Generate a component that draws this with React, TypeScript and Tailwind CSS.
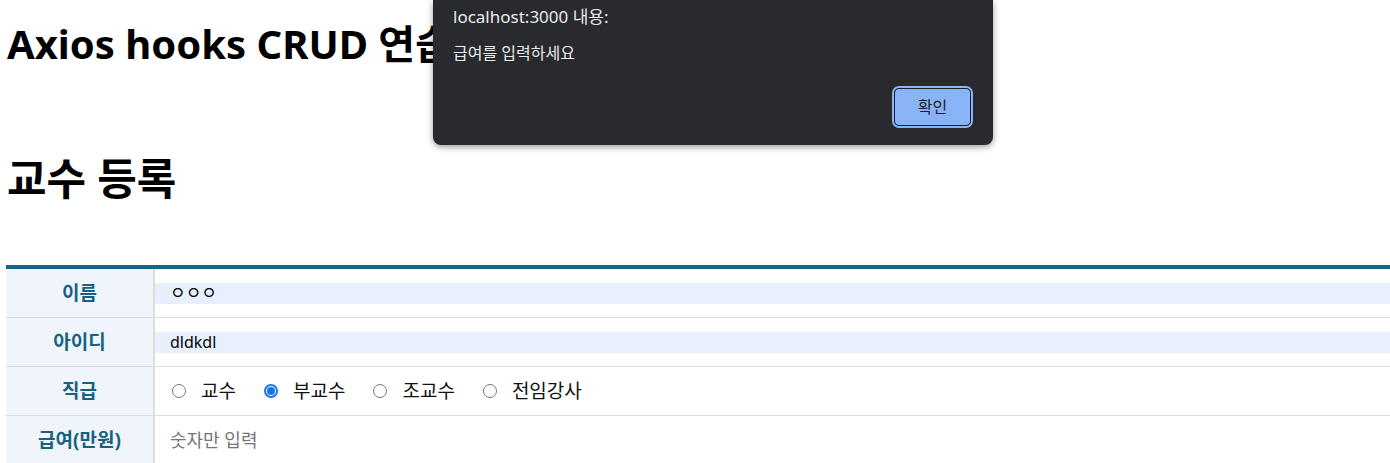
import React from "react";

const font = "font-['Noto_Sans','Noto_Sans_CJK_KR',sans-serif]";

function Radio({ checked, label, last }: { checked?: boolean; label: string; last?: boolean }) {
  return (
    <label className={last ? "flex items-center" : "flex items-center mr-[28px]"}>
      <span
        className={
          checked
            ? "w-[14px] h-[14px] rounded-full border-2 border-[#1a73e8] flex items-center justify-center bg-white"
            : "w-[14px] h-[14px] rounded-full border border-[#767676] bg-white"
        }
      >
        {checked && <span className="w-[8px] h-[8px] rounded-full bg-[#1a73e8]" />}
      </span>
      <span className="ml-[15px] text-[19px] text-[#111]">{label}</span>
    </label>
  );
}

function Row({ label, children, last }: { label: string; children: React.ReactNode; last?: boolean }) {
  return (
    <div className={last ? "flex h-[48px]" : "flex h-[49px] border-b border-[#dddddd]"}>
      <div className="w-[149px] shrink-0 bg-[#eff5fa] border-r-2 border-[#dddddd] flex items-center justify-center text-[19px] font-bold text-[#17607f]">
        {label}
      </div>
      <div className="flex-1 flex items-center">{children}</div>
    </div>
  );
}

export default function App() {
  return (
    <div className={`relative w-[1390px] h-[463px] overflow-hidden bg-white ${font}`}>
      <h1 className="pl-[7px] pt-[20px] text-[40px] leading-[48px] font-bold text-black">Axios hooks CRUD 연습</h1>
      <h2 className="pl-[7px] mt-[87px] text-[43px] leading-[48px] font-bold text-black">교수 등록</h2>
      <div className="pl-[6px] mt-[62px]">
        <div className="border-t-4 border-[#13678a]">
          <Row label="이름">
            <div className="w-full h-[21px] bg-[#e8f0fe] pl-[15px] flex items-center text-[17px] text-black">ㅇㅇㅇ</div>
          </Row>
          <Row label="아이디">
            <div className="w-full h-[21px] bg-[#e8f0fe] pl-[15px] flex items-center text-[16px] text-black">dldkdl</div>
          </Row>
          <Row label="직급">
            <div className="flex items-center pl-[17px]">
              <Radio label="교수" />
              <Radio label="부교수" checked />
              <Radio label="조교수" />
              <Radio label="전임강사" last />
            </div>
          </Row>
          <Row label="급여(만원)" last>
            <div className="pl-[15px] text-[18px] text-[#757575]">숫자만 입력</div>
          </Row>
        </div>
      </div>

      <div className="absolute left-[433px] top-0 w-[560px] h-[145px] bg-[#292a2d] rounded-b-[8px] shadow-[0_2px_6px_rgba(0,0,0,0.4)] px-[20px] pt-[4px] flex flex-col">
        <div className="text-[17px] text-[#e8eaed] leading-[26px]">localhost:3000 내용:</div>
        <div className="mt-[12px] text-[16px] text-[#e8eaed] leading-[22px]">급여를 입력하세요</div>
        <div className="flex justify-end mt-[22px]">
          <div className="w-[81px] h-[42px] rounded-[7px] border-2 border-[#8ab4f8]">
            <div className="w-full h-full rounded-[5px] border border-[#202124] bg-[#8ab4f8] flex items-center justify-center text-[16px] text-[#202124]">
              확인
            </div>
          </div>
        </div>
      </div>
    </div>
  );
}
